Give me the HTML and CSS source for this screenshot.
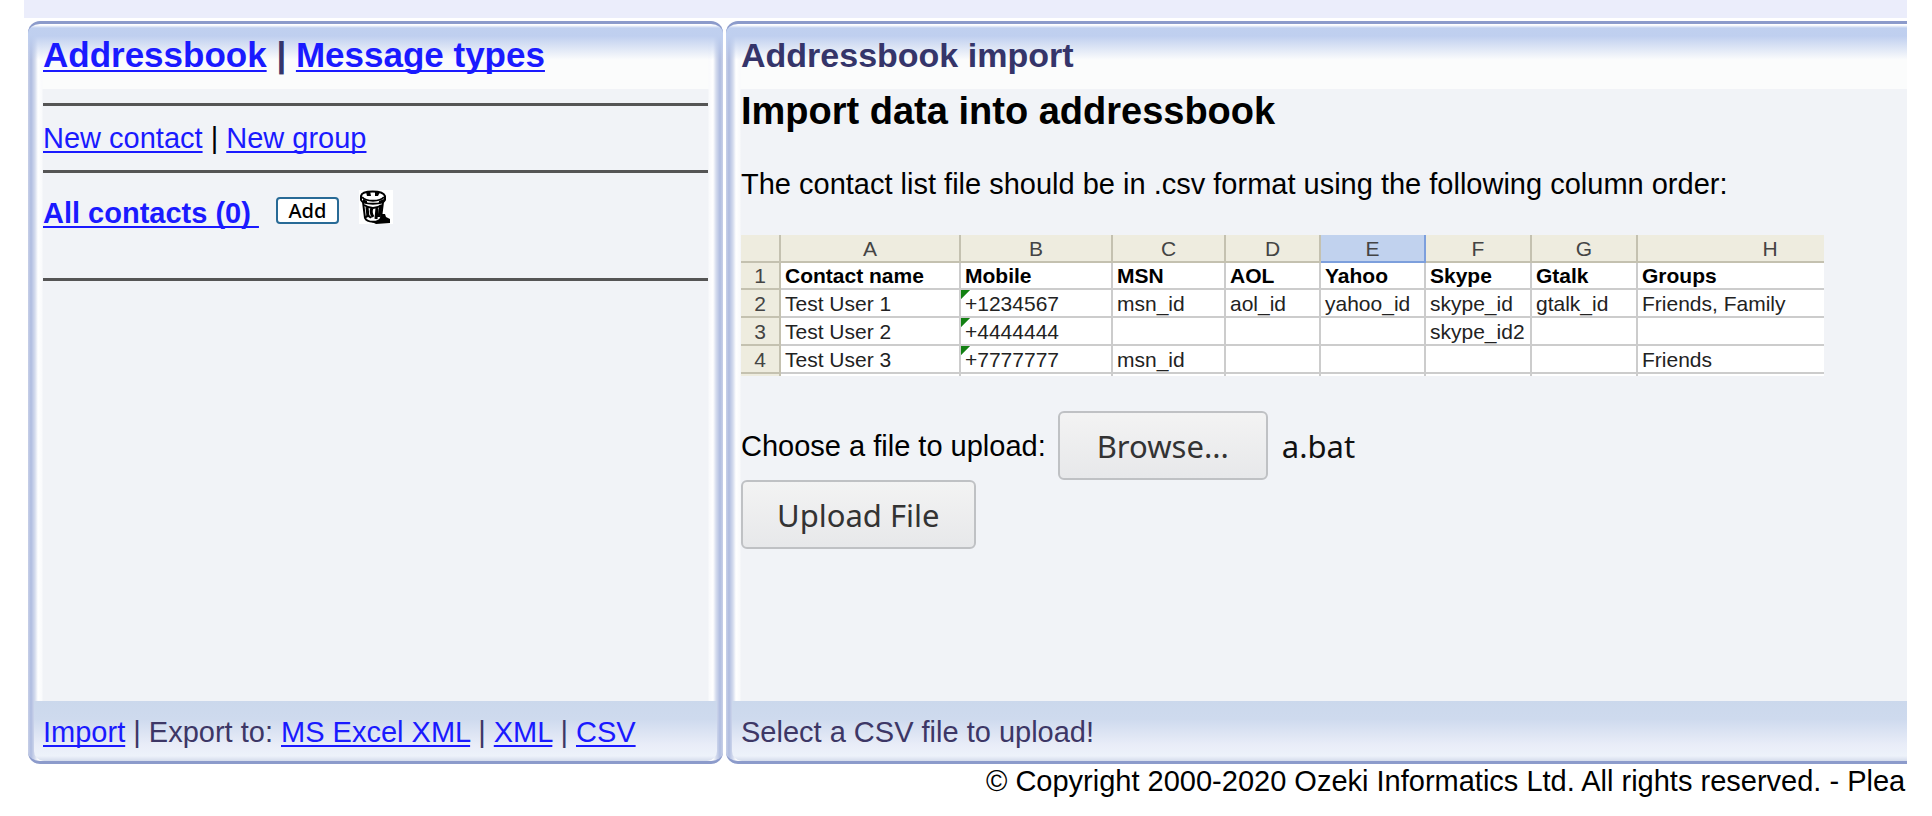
FILE: index.html
```html
<!DOCTYPE html>
<html lang="en">
<head>
<meta charset="utf-8">
<title>Addressbook import</title>
<link rel="stylesheet" href="styles.css">
</head>
<body>
<div class="page">
  <div class="topbar"></div>
  <div class="panels">
    <section class="panel sidebar">
      <header class="panel-head"><a href="#">Addressbook</a> | <a href="#">Message types</a></header>
      <div class="panel-body">
        <nav class="actions"><a href="#">New contact</a> | <a href="#">New group</a></nav>
        <div class="group">
          <a class="group-name" href="#">All contacts (0)&nbsp;</a>
          <button class="add" type="button">Add</button>
          <button class="trash" type="button" aria-label="Delete">
            <svg width="34" height="34" viewBox="0 0 34 34">
              <path fill="#fff" d="M0 0h34v34H0z"/>
              <path d="M21 24l5 0 1 3 4 2v4l-14 1-4-2z"/>
              <path fill="#fff" stroke="#000" stroke-width="2" d="M4 12l2 16c2 5 14 5 16 0l2-16z"/>
              <path fill="#fff" stroke="#000" stroke-width="2" d="M2 6c1-6 22-6 24 0l0 4c-2 5-22 5-24 0z"/>
              <path fill="none" stroke="#000" stroke-width="2" d="M3 7c4 5 18 5 22 0M5 15q9 6 18 0M6 28q3-4 6 0"/>
              <path d="M7 2l4-1 1 5-4 0zM16 1l5 1-2 4-3 0zM4 9l4 2v3l-4-2zM20 11l5-2v3l-5 2z"/>
              <path fill="none" stroke="#000" stroke-width="3" d="M8 17l1 10M13 18q-2 4 1 9M18 18l-1 11M22 15l-2 12"/>
            </svg>
          </button>
        </div>
      </div>
      <footer class="panel-foot"><a href="#">Import</a> | Export to: <a href="#">MS Excel XML</a> | <a href="#">XML</a> | <a href="#">CSV</a></footer>
    </section>
    <section class="panel main">
      <header class="panel-head">Addressbook import</header>
      <div class="panel-body">
        <h1>Import data into addressbook</h1>
        <p>The contact list file should be in .csv format using the following column order:</p>
        <table class="sheet">
          <colgroup><col class="c-num"><col class="c-a"><col class="c-b"><col class="c-c"><col class="c-d"><col class="c-e"><col class="c-f"><col class="c-f"><col class="c-h"></colgroup>
          <thead>
            <tr><th></th><th>A</th><th>B</th><th>C</th><th>D</th><th class="selected">E</th><th>F</th><th>G</th><th class="wide">H</th></tr>
          </thead>
          <tbody>
            <tr class="titles"><th>1</th><td>Contact name</td><td>Mobile</td><td>MSN</td><td>AOL</td><td>Yahoo</td><td>Skype</td><td>Gtalk</td><td>Groups</td></tr>
            <tr><th>2</th><td>Test User 1</td><td class="flag">+1234567</td><td>msn_id</td><td>aol_id</td><td>yahoo_id</td><td>skype_id</td><td>gtalk_id</td><td>Friends, Family</td></tr>
            <tr><th>3</th><td>Test User 2</td><td class="flag">+4444444</td><td></td><td></td><td></td><td>skype_id2</td><td></td><td></td></tr>
            <tr><th>4</th><td>Test User 3</td><td class="flag">+7777777</td><td>msn_id</td><td></td><td></td><td></td><td></td><td>Friends</td></tr>
            <tr class="cut"><th></th><td></td><td></td><td></td><td></td><td></td><td></td><td></td><td></td></tr>
          </tbody>
        </table>
        <form class="upload">
          <div class="file-row">
            <label for="browse">Choose a file to upload:</label>
            <button class="btn" id="browse" type="button">Browse...</button>
            <output class="file-name" for="browse">a.bat</output>
          </div>
          <button class="btn" type="submit">Upload File</button>
        </form>
      </div>
      <footer class="panel-foot">Select a CSV file to upload!</footer>
    </section>
  </div>
  <div class="copyright">© Copyright 2000-2020 Ozeki Informatics Ltd. All rights reserved. - Plea</div>
</div>
</body>
</html>
```
FILE: styles.css
```css
* { box-sizing: border-box; }
body {
  margin: 0;
  background: #fff;
  color: #000;
  font: 29px/34px "Liberation Sans", Arial, sans-serif;
}
.page {
  min-height: 100vh;
  margin: 0 25px 0 24px;
  overflow: hidden;
  display: flex;
  flex-direction: column;
}
.topbar { height: 18px; background: #ebedfb; margin-bottom: 3px; }
.panels { display: flex; gap: 3px; margin-left: 4px; min-height: 743px; }
a { color: #1a1aff; text-decoration-thickness: 2px; text-underline-offset: 3px; text-decoration-skip-ink: none; }

.panel {
  display: flex;
  flex-direction: column;
  border-top: 3px solid #8c9bcb;
  border-bottom: 3px solid #8c9bcb;
  border-radius: 12px;
  background:
    linear-gradient(#fff 0, #fff 1px, #c0d0ef 4px, #bfcfef 12px, rgba(191, 207, 239, 0) 36px) top / 100% 36px no-repeat,
    linear-gradient(to right, #c8d0e8 0, #afbce0 3px, #d5dcee 7px, #fff 10px, #f9fafc 14px, rgba(249, 250, 252, 0) 15px) left / 15px 100% no-repeat,
    linear-gradient(to left, #c8d0e8 0, #afbce0 3px, #d5dcee 7px, #fff 10px, #f9fafc 14px, rgba(249, 250, 252, 0) 15px) right / 15px 100% no-repeat,
    linear-gradient(#fbfcfc, #fbfcfc) top / 100% 65px no-repeat,
    #f1f3f7;
}
.sidebar { flex: 0 0 695px; }
.main {
  flex: 1;
  min-width: 0;
  border-radius: 12px 0 0 12px;
  background:
    linear-gradient(#fff 0, #fff 1px, #c0d0ef 4px, #bfcfef 12px, rgba(191, 207, 239, 0) 36px) top / 100% 36px no-repeat,
    linear-gradient(to right, #c8d0e8 0, #afbce0 3px, #d5dcee 7px, #fff 10px, #f9fafc 14px, rgba(249, 250, 252, 0) 15px) left / 15px 100% no-repeat,
    linear-gradient(#fbfcfc, #fbfcfc) top / 100% 65px no-repeat,
    #f1f3f7;
}
.panel-head {
  height: 65px;
  padding: 11px 15px 0;
  font-size: 34px;
  line-height: 40px;
  font-weight: bold;
  color: #35356a;
}
.sidebar .panel-head { font-size: 35px; }
.panel-body { flex: 1; padding: 0 15px; }
.panel-foot {
  height: 60px;
  margin: 0 6px;
  padding: 14px 9px 0;
  color: #3d3766;
  background: linear-gradient(#cbd8ec 0, #cedaee 18px, #e9edf8 44px, #edf2fa 55px, #d5dcec 60px);
  border-radius: 0 0 10px 10px;
}
.main .panel-foot { margin-right: 0; border-radius: 0 0 0 10px; }

.actions {
  margin-top: 14px;
  padding: 15px 0 15px;
  border-top: 3px solid #555;
  border-bottom: 3px solid #555;
}
.group {
  display: flex;
  align-items: flex-start;
  height: 108px;
  padding-top: 17px;
  border-bottom: 3px solid #555;
}
.group-name { font-weight: bold; margin: 6px 17px 0 0; }
.add {
  width: 63px;
  height: 27px;
  margin: 7px 20px 0 0;
  padding: 0;
  border: 2px solid #286a96;
  border-radius: 4px;
  background: #fff;
  color: #000;
  font: 500 20px/22px "Noto Sans", sans-serif;
}
.trash { width: 34px; height: 34px; padding: 0; border: 0; background: none; }
.trash svg { display: block; }

h1 { margin: 0; font-size: 38px; line-height: 44px; }
p { margin: 34px 0; }
.sheet {
  width: 1083px;
  table-layout: fixed;
  border-collapse: separate;
  border-spacing: 0;
  background: #fff;
  color: #222;
  font-size: 21px;
  line-height: 24px;
}
.c-num { width: 40px; }
.c-a { width: 180px; }
.c-b { width: 152px; }
.c-c { width: 113px; }
.c-d { width: 95px; }
.c-e { width: 105px; }
.c-f { width: 106px; }
.c-h { width: 186px; }
.sheet th, .sheet td {
  height: 28px;
  padding: 1px 0 0 4px;
  border-right: 2px solid #ccc;
  border-bottom: 2px solid #ccc;
  text-align: left;
  white-space: nowrap;
}
.sheet th {
  padding: 1px 0 0;
  background: #eeecdf;
  border-color: #c4c1b0;
  font-weight: normal;
  text-align: center;
  color: #444;
}
.sheet th.selected { background: #c1d2ee; border-color: #7d9fdc; }
.sheet th.wide { padding-left: 78px; }
.sheet tr > :last-child { border-right: 0; }
.sheet .titles > * { height: 27px; }
.sheet .titles td { font-weight: bold; color: #000; }
.sheet .flag { background: linear-gradient(135deg, #128012 6px, transparent 7px); }
.sheet .cut > * { height: 2px; padding: 0; border-bottom: 0; }

.upload { margin-top: 35px; }
.file-row { display: flex; align-items: center; }
.btn {
  height: 69px;
  padding: 0 34px;
  border: 2px solid #bfc1c4;
  border-radius: 6px;
  background: linear-gradient(#f3f3f3, #e7e8ea);
  color: #333;
  font: 31px/42px "Noto Sans", sans-serif;
}
.file-row .btn { margin: 0 14px 0 12px; padding: 0 37px; }
.file-name { font: 31px/42px "Noto Sans", sans-serif; color: #111; }
.copyright { padding-left: 962px; white-space: nowrap; }
```
